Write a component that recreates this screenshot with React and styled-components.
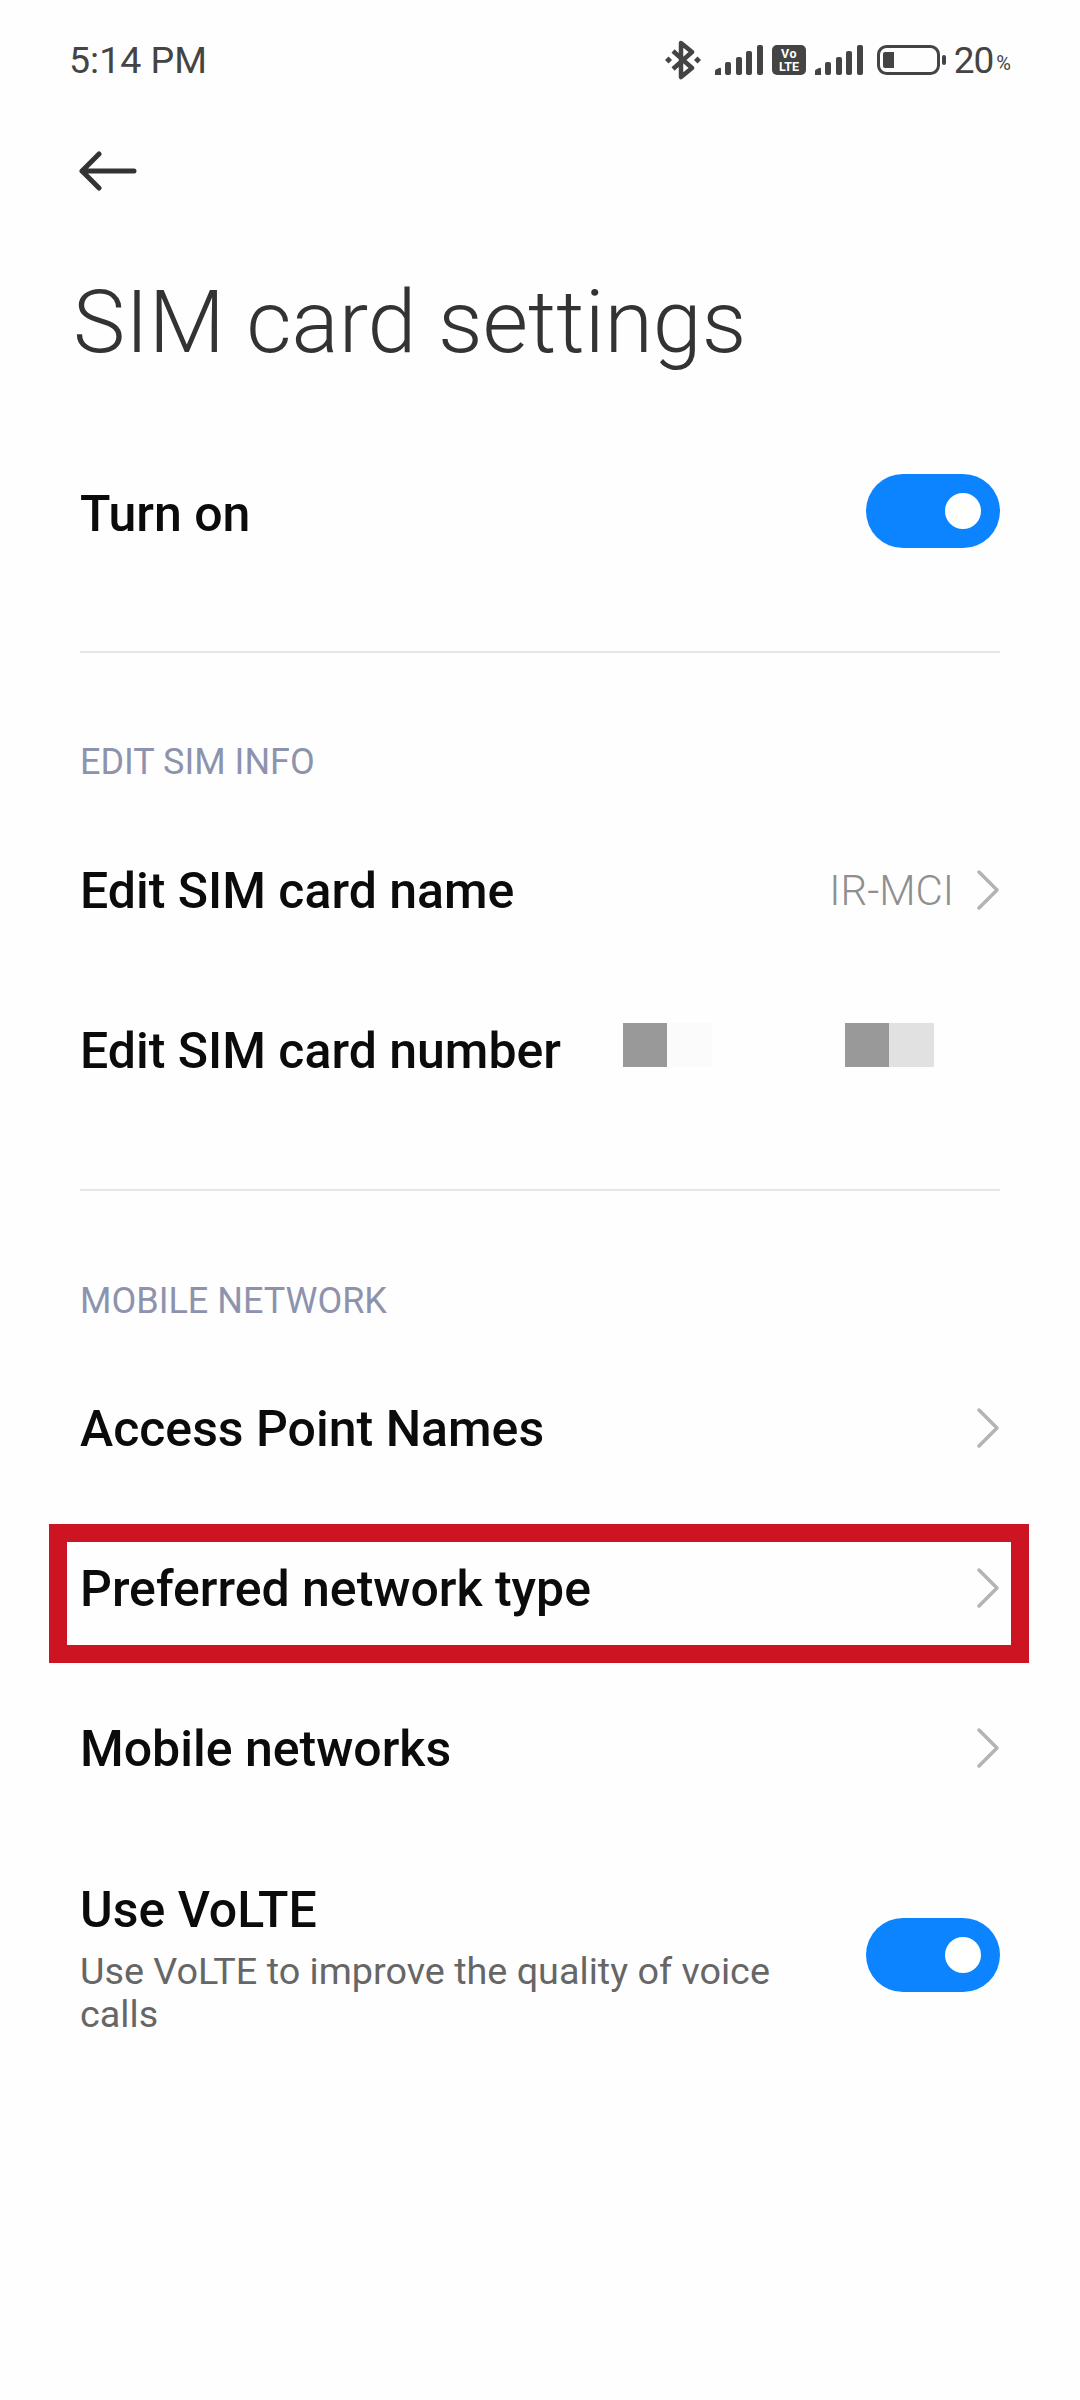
import React from 'react';
import styled, { createGlobalStyle } from 'styled-components';

const GlobalStyle = createGlobalStyle`
  html, body {
    margin: 0;
    padding: 0;
    background: #fff;
    font-family: Roboto, "Liberation Sans", sans-serif;
  }
`

const Page = styled.div`
  width: 1080px;
  height: 2400px;
  overflow: hidden;
  background: #fefefe;
`

const StatusBar = styled.div`
  height: 120px;
  padding: 0 69px 0 69px;
  display: flex;
  align-items: center;
  justify-content: space-between;
  color: #444;
`

const Time = styled.span`
  font-size: 37.5px;
`

const StatusIcons = styled.div`
  display: flex;
  align-items: center;
`

const Spacer = styled.span`
  width: ${props => props.$width}px;
`

const Level = styled.span`
  font-size: 37px;
  margin-left: 7px;
  letter-spacing: -1px;
`

const Percent = styled.span`
  font-size: 20px;
  margin-left: 3px;
  padding-top: 5px;
`

const BackRow = styled.div`
  height: 102px;
  padding-left: 79px;
  display: flex;
  align-items: center;
`

const Title = styled.h1`
  margin: 0;
  height: 209px;
  padding-left: 73px;
  line-height: 200px;
  font-size: 88px;
  font-weight: 300;
  color: #333;
`

const Content = styled.div`
  padding: 0 80px;
`

const Row = styled.div`
  position: relative;
  height: 160px;
  display: flex;
  align-items: center;
  justify-content: ${props => (props.$start ? 'flex-start' : 'space-between')};
`

const RowTitle = styled.div`
  padding-top: ${props => props.$drop || 2}px;
  font-size: 50px;
  font-weight: 500;
  color: #0b0b0b;
  white-space: nowrap;
`

const Subtitle = styled.div`
  margin-top: 11px;
  font-size: 37.75px;
  line-height: 43px;
  color: #666;
`

const TextBlock = styled.div`
  width: 720px;
  margin-top: 5px;
`

const TallRow = styled(Row)`
  height: 170px;
  margin-top: 42px;
`

const RightSide = styled.div`
  display: flex;
  align-items: center;
`

const Value = styled.span`
  font-size: 42px;
  font-weight: 300;
  color: #8f8f8f;
  margin-right: 22px;
`

const Chevron = styled.svg`
  width: 24px;
  height: 40px;
  display: block;
`

const Toggle = styled.div`
  width: 134px;
  height: 74px;
  border-radius: 37px;
  background: #0d84ff;
  display: flex;
  align-items: center;
  justify-content: flex-end;
  padding-right: 19px;
  box-sizing: border-box;
`

const Knob = styled.span`
  width: 36px;
  height: 36px;
  border-radius: 50%;
  background: #fff;
`

const Divider = styled.div`
  height: 2px;
  background: #e6e6e9;
  margin-top: ${props => props.$top}px;
`

const SectionLabel = styled.div`
  height: ${props => props.$height}px;
  margin-top: ${props => props.$top}px;
  line-height: 48px;
  font-size: 36px;
  color: #8e93ad;
`

const Masked = styled.div`
  display: flex;
  margin-left: ${props => props.$left}px;
  margin-top: -10px;
`

const MaskCell = styled.span`
  width: 44.5px;
  height: 44px;
  background: ${props => props.$color};
`

const Highlight = styled.div`
  position: absolute;
  left: -31px;
  right: -29px;
  top: 16px;
  height: 139px;
  box-sizing: border-box;
  border: 18px solid #cc1423;
`

const BackIcon = () => (
  <svg width="58" height="42" viewBox="0 0 58 42" fill="none" stroke="#333" strokeWidth="5" strokeLinecap="round" strokeLinejoin="round">
    <path d="M3 21H55M20 4L3 21L20 38" />
  </svg>
)

const Bluetooth = () => (
  <svg width="36" height="40" viewBox="0 0 36 40" fill="none" stroke="#444" strokeWidth="4.5" strokeLinejoin="round">
    <path d="M8 11L27 28L16 37V3L27 12L8 29" />
    <path d="M3.5 16.5L7 20L3.5 23.5L0 20Z" fill="#444" stroke="none" />
    <path d="M32.5 16.5L36 20L32.5 23.5L29 20Z" fill="#444" stroke="none" />
  </svg>
)

const Signal = () => (
  <svg width="48" height="32" viewBox="0 0 48 32" fill="#444">
    <path d="M0 27Q0 26 1 25.500L4 24Q6 23 6 25V31H0Z" />
    <rect x="10" y="18" width="6" height="13" rx="2" />
    <rect x="21" y="13" width="6" height="18" rx="2" />
    <rect x="31" y="7" width="6" height="24" rx="2" />
    <rect x="42" y="1" width="6" height="30" rx="2" />
  </svg>
)

const Volte = () => (
  <svg width="34" height="30" viewBox="0 0 34 30">
    <rect width="34" height="30" rx="5" fill="#444" />
    <text x="17" y="13" textAnchor="middle" fontSize="12.5" fontWeight="700" fontFamily="Roboto" letterSpacing="0.5" fill="#fff">Vo</text>
    <text x="17" y="26" textAnchor="middle" fontSize="12.5" fontWeight="700" fontFamily="Roboto" fill="#fff">LTE</text>
  </svg>
)

const Battery = () => (
  <svg width="70" height="30" viewBox="0 0 70 30">
    <rect x="1.5" y="1.5" width="60" height="27" rx="8" fill="none" stroke="#444" strokeWidth="3" />
    <path d="M8 7H17V23H8A2 2 0 0 1 6 21V9A2 2 0 0 1 8 7Z" fill="#444" />
    <rect x="65" y="10" width="4" height="10" rx="2" fill="#444" />
  </svg>
)

const ChevronIcon = () => (
  <Chevron viewBox="0 0 24 40" fill="none" stroke="#b3b3b3" strokeWidth="3.5" strokeLinecap="round" strokeLinejoin="round">
    <path d="M3 2L21 20L3 38" />
  </Chevron>
)

function App() {
  return (
    <Page>
      <GlobalStyle />

      {/* Status bar */}
      <StatusBar>
        <Time>5:14 PM</Time>
        <StatusIcons>
          <Bluetooth />
          <Spacer $width={14} />
          <Signal />
          <Spacer $width={9} />
          <Volte />
          <Spacer $width={9} />
          <Signal />
          <Spacer $width={14} />
          <Battery />
          <Level>20</Level>
          <Percent>%</Percent>
        </StatusIcons>
      </StatusBar>

      <BackRow>
        <BackIcon />
      </BackRow>
      <Title>SIM card settings</Title>

      <Content>
        <Row>
          <RowTitle $drop={6}>Turn on</RowTitle>
          <Toggle><Knob /></Toggle>
        </Row>
        <Divider $top={60} />

        <SectionLabel $top={85} $height={72}>EDIT SIM INFO</SectionLabel>
        <Row>
          <RowTitle>Edit SIM card name</RowTitle>
          <RightSide>
            <Value>IR-MCI</Value>
            <ChevronIcon />
          </RightSide>
        </Row>
        <Row $start>
          <RowTitle>Edit SIM card number</RowTitle>
          <Masked $left={62}>
            <MaskCell $color="#999" />
            <MaskCell $color="#fbfbfb" />
          </Masked>
          <Masked $left={133}>
            <MaskCell $color="#999" />
            <MaskCell $color="#e1e1e1" />
          </Masked>
        </Row>
        <Divider $top={59} />

        <SectionLabel $top={86} $height={71}>MOBILE NETWORK</SectionLabel>
        <Row>
          <RowTitle>Access Point Names</RowTitle>
          <ChevronIcon />
        </Row>
        <Row>
          <RowTitle>Preferred network type</RowTitle>
          <ChevronIcon />
          <Highlight />
        </Row>
        <Row>
          <RowTitle>Mobile networks</RowTitle>
          <ChevronIcon />
        </Row>
        <TallRow>
          <TextBlock>
            <RowTitle>Use VoLTE</RowTitle>
            <Subtitle>Use VoLTE to improve the quality of voice calls</Subtitle>
          </TextBlock>
          <Toggle><Knob /></Toggle>
        </TallRow>
      </Content>
    </Page>
  );
}

export default App;
